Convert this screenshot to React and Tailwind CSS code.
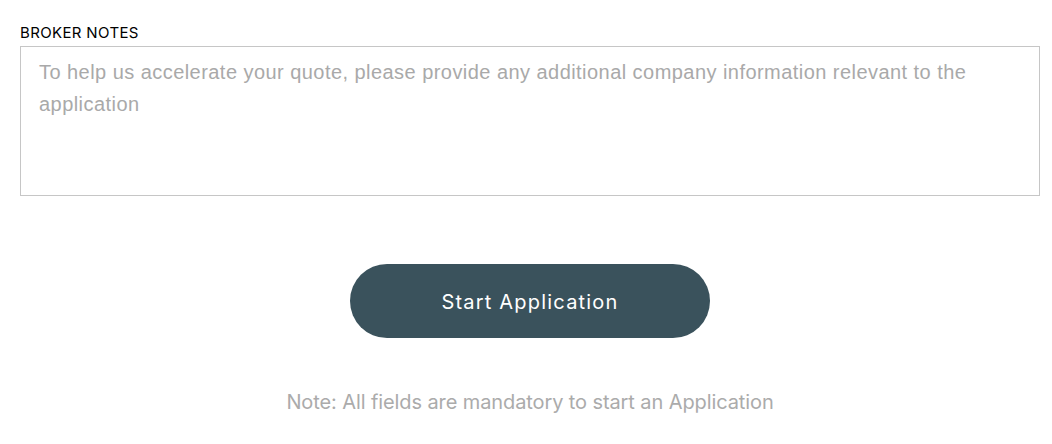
export default function App() {
  return (
    <div className="w-[1052px] h-[444px] bg-white pl-[20px] pr-[12px] pt-[24px]">
      <label className="block text-[15px] leading-[18px] text-black mb-[4px] [font-family:Inter,sans-serif] tracking-[0.35px]">
        BROKER NOTES
      </label>
      <textarea
        className="block w-[1020px] h-[150px] border border-[#c6c6c6] px-[18px] py-[9px] text-[20px] leading-[32px] tracking-[0.45px] text-gray-800 placeholder:text-[#a9a9a9] resize-none outline-none [font-family:'Liberation_Sans',Arial,sans-serif]"
        placeholder="To help us accelerate your quote, please provide any additional company information relevant to the application"
      />
      <div className="flex flex-col items-center w-[1020px] mt-[68px]">
        <button className="w-[360px] h-[74px] pt-[2px] rounded-full bg-[#3a525c] text-white text-[20px] tracking-[1.2px] [font-family:Inter,sans-serif]">
          Start Application
        </button>
        <p className="mt-[52px] text-[20px] leading-[24px] tracking-[-0.1px] text-[#ababab] [font-family:Inter,sans-serif]">
          Note: All fields are mandatory to start an Application
        </p>
      </div>
    </div>
  );
}
